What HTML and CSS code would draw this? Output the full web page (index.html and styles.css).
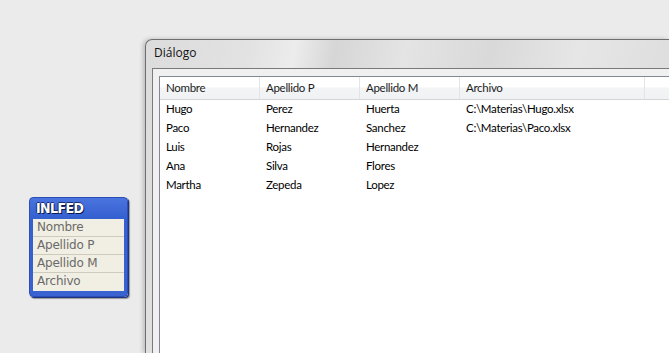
FILE: index.html
```html
<!DOCTYPE html>
<html>
<head>
<meta charset="utf-8">
<link rel="stylesheet" href="styles.css">
</head>
<body>

  <!-- entity box on the canvas -->
  <div class="entity">
    <div class="entity-title">INLFED</div>
    <div class="entity-fields">
      <div class="field">Nombre</div>
      <div class="field">Apellido P</div>
      <div class="field">Apellido M</div>
      <div class="field">Archivo</div>
    </div>
  </div>

  <!-- dialog window -->
  <div class="dialog">
    <div class="titlebar">Diálogo</div>
    <div class="client">
      <div class="listview">
        <div class="row head">
          <div class="cell">Nombre</div>
          <div class="cell">Apellido P</div>
          <div class="cell">Apellido M</div>
          <div class="cell">Archivo</div>
          <div class="cell"></div>
        </div>
        <div class="row">
          <div class="cell">Hugo</div>
          <div class="cell">Perez</div>
          <div class="cell">Huerta</div>
          <div class="cell">C:\Materias\Hugo.xlsx</div>
        </div>
        <div class="row">
          <div class="cell">Paco</div>
          <div class="cell">Hernandez</div>
          <div class="cell">Sanchez</div>
          <div class="cell">C:\Materias\Paco.xlsx</div>
        </div>
        <div class="row">
          <div class="cell">Luis</div>
          <div class="cell">Rojas</div>
          <div class="cell">Hernandez</div>
          <div class="cell"></div>
        </div>
        <div class="row">
          <div class="cell">Ana</div>
          <div class="cell">Silva</div>
          <div class="cell">Flores</div>
          <div class="cell"></div>
        </div>
        <div class="row">
          <div class="cell">Martha</div>
          <div class="cell">Zepeda</div>
          <div class="cell">Lopez</div>
          <div class="cell"></div>
        </div>
      </div>
    </div>
  </div>

</body>
</html>
```

FILE: styles.css
```css
* {
  box-sizing: border-box;
}

html, body {
  margin: 0;
  height: 100%;
}

body {
  position: relative;
  overflow: hidden;
  background-color: #ebebeb;
  font-family: "Lato", "Open Sans", sans-serif;
}

/* Entity box */
.entity {
  position: absolute;
  left: 29px;
  top: 197px;
  width: 99px;
  height: 100px;
  padding: 0 3px 5px 3px;
  background: linear-gradient(#4a74de, #3560d0 20px, #3a62d0);
  border: 1px solid #2b4db5;
  border-radius: 4px;
  box-shadow: 1px 1px 0 #1f3480, 2px 2px 1px rgba(0, 0, 0, 0.35);
}

.entity-title {
  height: 21px;
  line-height: 21px;
  padding-left: 3px;
  color: white;
  font-family: "DejaVu Sans Condensed", "DejaVu Sans", sans-serif;
  font-weight: bold;
  font-size: 14px;
  letter-spacing: -0.6px;
  text-shadow: 1px 1px 0 #0c1a4a, -1px 0 0 #1b2e70, 0 -1px 0 #1b2e70;
}

.entity-fields {
  background-color: #f1efe3;
}

.field {
  height: 18px;
  line-height: 17px;
  padding-left: 4px;
  border-bottom: 1px solid #cdcbbd;
  color: #6a6a6a;
  font-family: "DejaVu Sans", sans-serif;
  font-size: 12px;
  letter-spacing: -0.2px;
}

.field:last-child {
  border-bottom: none;
}

/* Dialog window, runs off the right and bottom edges */
.dialog {
  position: absolute;
  left: 145px;
  top: 39px;
  right: 0;
  bottom: 0;
  display: flex;
  flex-direction: column;
  border: 1px solid #6e6e6e;
  border-right: none;
  border-bottom: none;
  border-top-left-radius: 7px;
  background: linear-gradient(100deg, #dcdcdc 0%, #e2e2e2 18%, #ececec 26%, #d6d6d6 33%, #e4e4e4 45%, #d9d9d9 60%, #e6e6e6 75%, #dadada 100%);
  box-shadow: -2px 0 4px rgba(0, 0, 0, 0.2);
  padding-left: 6px;
}

.titlebar {
  height: 28px;
  line-height: 26px;
  padding-left: 2px;
  color: #111;
  font-family: "Open Sans", sans-serif;
  font-size: 12px;
}

.client {
  flex: 1;
  background-color: #f0f0f0;
  border: 1px solid #7a7a7a;
  border-right: none;
  border-bottom: none;
  padding: 7px 0 0 6px;
}

.listview {
  height: 100%;
  background-color: white;
  border: 1px solid #828790;
  border-right: none;
  border-bottom: none;
  font-size: 11.5px;
  letter-spacing: -0.3px;
  color: #000;
}

.row {
  display: grid;
  grid-template-columns: 100px 100px 100px 185px 1fr;
  height: 19px;
  line-height: 18px;
}

.row .cell {
  padding-left: 6px;
  white-space: nowrap;
}

.row.head {
  height: 23px;
  line-height: 22px;
  background: linear-gradient(#ffffff, #ffffff 45%, #f3f4f6 50%, #f1f2f4);
  border-bottom: 1px solid #d5d5d5;
  color: #1c1c1c;
}

.row.head .cell {
  border-right: 1px solid #e3e4e6;
}

.row.head .cell:last-child {
  border-right: none;
}
```
